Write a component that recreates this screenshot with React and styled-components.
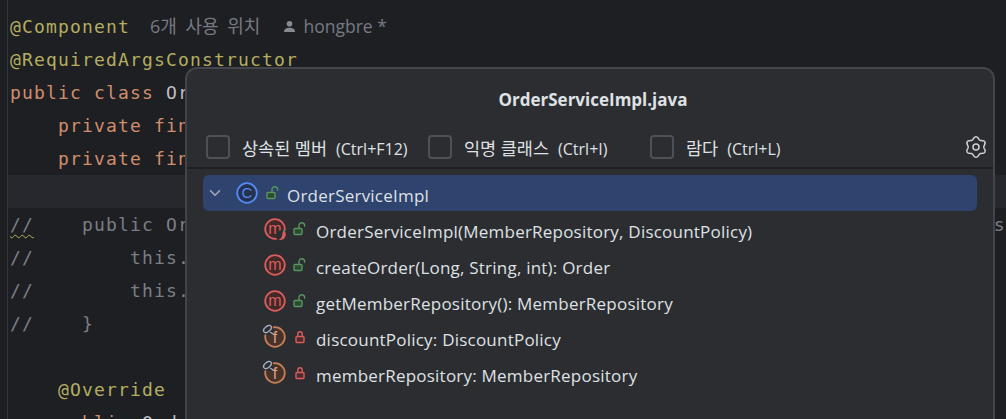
import styled, { createGlobalStyle } from "styled-components";
import { LuChevronDown } from "react-icons/lu";

const GlobalStyle = createGlobalStyle`
  html, body {
    margin: 0;
    padding: 0;
    height: 100%;
    overflow: hidden;
    background: #1e1f22;
  }
`

const Screen = styled.div`
  position: relative;
  width: 1006px;
  height: 419px;
  overflow: hidden;
  background: #1e1f22;
`

const Editor = styled.div`
  margin-left: 7px;
  height: 100%;
  padding-top: 10px;
  box-sizing: border-box;
  border-left: 1px solid #313438;
  font-family: "DejaVu Sans Mono", "Liberation Mono", monospace;
  font-size: 18px;
  letter-spacing: 1.16px;
  color: #bcbec4;
`

const Line = styled.div`
  height: 33px;
  line-height: 33px;
  padding-left: 2px;
  white-space: pre;
  background: ${(p) => (p.$current ? "#26282e" : "transparent")};
`

const Annotation = styled.span`
  color: #b3ae60;
`

const Keyword = styled.span`
  color: #cf8e6d;
`

const Comment = styled.span`
  color: #7a7e85;
`

const Wavy = styled.span`
  text-decoration: underline wavy #b3ae60 1px;
  text-underline-offset: 3px;
`

const Hint = styled.span`
  display: inline-flex;
  align-items: center;
  margin-left: 20px;
  font-family: "Open Sans", "Noto Sans CJK KR", sans-serif;
  font-size: 18px;
  word-spacing: 4px;
  letter-spacing: 0;
  color: #767a82;
  vertical-align: top;
`

const Author = styled(Hint)`
  margin-left: 23px;
  gap: 7px;
  font-size: 17.5px;
  word-spacing: 0;
`

const Popup = styled.div`
  position: absolute;
  left: 185px;
  top: 67px;
  width: 810px;
  height: 380px;
  box-sizing: border-box;
  background: #2b2d30;
  border: 2px solid #43454a;
  border-radius: 12px;
  font-family: "Open Sans", "Noto Sans CJK KR", sans-serif;
  color: #dfe1e5;
`

const Title = styled.div`
  height: 62px;
  line-height: 62px;
  padding-left: 6px;
  text-align: center;
  font-size: 17px;
  font-weight: 700;
`

const Filters = styled.div`
  display: flex;
  align-items: center;
  height: 32px;
  padding: 0 5px 4px 19px;
  border-bottom: 2px solid #1e1f22;
`

const Filter = styled.label`
  display: flex;
  align-items: center;
  gap: 12px;
  width: ${(p) => p.$width}px;
  font-size: 16px;
`

const Korean = styled.span`
  font-size: 17.5px;
  margin-right: 9px;
`

const Checkbox = styled.span`
  flex: none;
  width: 20px;
  height: 20px;
  border: 2px solid #4e5157;
  border-radius: 4px;
`

const GearSlot = styled.svg`
  flex: none;
  margin-left: auto;
  margin-right: 1px;
  width: 22px;
  height: 22px;
`

const Tree = styled.div`
  padding: 6px 16px 0 16px;
`

const Row = styled.div`
  display: flex;
  align-items: center;
  height: 36px;
  padding-left: ${(p) => (p.$root ? 0 : 59)}px;
  border-radius: 6px;
  background: ${(p) => (p.$root ? "#2e436e" : "transparent")};
  font-size: 17px;
  letter-spacing: 0.22px;
  white-space: nowrap;
`

const RowText = styled.span`
  margin-top: 4px;
`

const Chevron = styled(LuChevronDown)`
  flex: none;
  width: 18px;
  margin: 0 10px 0 3px;
  font-size: 18px;
  color: #a8adbd;
`

const IconSlot = styled.svg`
  flex: none;
  width: 26px;
  height: 26px;
`

const LockSlot = styled.svg`
  flex: none;
  width: 14px;
  height: 14px;
  margin: -1px ${(p) => (p.$root ? 7 : 9)}px 0 ${(p) => (p.$root ? 6 : 5)}px;
`

const PALETTE = {
  c: { stroke: "#548af7", fill: "#25324d", text: "#548af7" },
  m: { stroke: "#db5c5c", fill: "#402929", text: "#db5c5c" },
  f: { stroke: "#c77d55", fill: "#45322b", text: "#e0a080" },
}

const SymbolIcon = ({ kind, pepper, pin }) => {
  const c = PALETTE[kind]
  return (
    <IconSlot viewBox="0 0 26 26">
      <circle cx="13" cy="13" r="9.800" fill={c.fill} stroke={c.stroke} strokeWidth="1.800" />
      <text
        x="13"
        y={kind === "f" ? 19 : 18}
        textAnchor="middle"
        fontFamily="'Liberation Sans', sans-serif"
        fontSize={kind === "c" ? 15 : 16}
        fill={c.text}
      >
        {kind === "c" ? "C" : kind}
      </text>
      {pepper && (
        <>
          <circle cx="20" cy="20" r="6" fill="#2b2d30" />
          <path d="M22 14.500c2 1.500 2.500 5 .5 7.500-1.500 1.800-4 2.500-6 2 2.500-1 3.500-3 3.800-5.500.1-1.500.6-3 1.700-4z" fill="#db5c5c" />
          <path d="M21.500 16l1-2.500" stroke="#57965c" strokeWidth="1.200" />
        </>
      )}
      {pin && (
        <>
          <circle cx="6" cy="5.500" r="5.500" fill="#2b2d30" />
          <ellipse cx="5.500" cy="5" rx="4.500" ry="2.600" transform="rotate(-40 5.500 5)" fill="#2b2d30" stroke="#a8adbd" strokeWidth="1.400" />
          <path d="M8 8l4 2.500" stroke="#a8adbd" strokeWidth="1.400" />
        </>
      )}
    </IconSlot>
  )
}

const Lock = ({ open, root }) => (
  <LockSlot $root={root} viewBox="0 0 14 14" fill="none" strokeWidth="1.400">
    {open ? (
      <>
        <rect x="1" y="6.500" width="8" height="6" rx="1" fill="#2b4a30" stroke="#57965c" />
        <path d="M6 6.500V3.500a2.800 2.800 0 0 1 5.600 0v1.200" stroke="#57965c" />
      </>
    ) : (
      <>
        <rect x="3" y="6.500" width="8" height="6" rx="1" fill="#4a2b2e" stroke="#db5c5c" />
        <path d="M4.800 6.500V4a2.200 2.200 0 0 1 4.400 0v2.500" stroke="#db5c5c" />
      </>
    )}
  </LockSlot>
)

const PersonIcon = () => (
  <svg width="13" height="13" viewBox="0 0 13 13" fill="#868a91">
    <circle cx="6.500" cy="3.800" r="2.800" />
    <path d="M1 12c0-3 2.500-4.300 5.500-4.300S12 9 12 12z" />
  </svg>
)

// six soft lobes, the points sit on top and bottom
const gearPath = () => {
  const points = []
  for (let i = 0; i < 120; i++) {
    const a = (i / 120) * Math.PI * 2
    const r = 9 + 1.2 * Math.cos(6 * a)
    points.push(`${(11 + r * Math.sin(a)).toFixed(2)} ${(11 - r * Math.cos(a)).toFixed(2)}`)
  }
  return `M${points.join("L")}Z`
}

const GearIcon = () => (
  <GearSlot viewBox="0 0 22 22" fill="none" stroke="#ced0d6" strokeWidth="1.500">
    <path d={gearPath()} strokeLinejoin="round" />
    <circle cx="11" cy="11" r="3" />
  </GearSlot>
)

const members = [
  { kind: "m", pepper: true, open: true, text: "OrderServiceImpl(MemberRepository, DiscountPolicy)" },
  { kind: "m", open: true, text: "createOrder(Long, String, int): Order" },
  { kind: "m", open: true, text: "getMemberRepository(): MemberRepository" },
  { kind: "f", pin: true, text: "discountPolicy: DiscountPolicy" },
  { kind: "f", pin: true, text: "memberRepository: MemberRepository" },
]

const App = () => {
  return (
    <Screen>
      <GlobalStyle />
      <Editor>
        <Line>
          <Annotation>@Component</Annotation>
          <Hint>6개 사용 위치</Hint>
          <Author><PersonIcon />hongbre *</Author>
        </Line>
        <Line><Annotation>@RequiredArgsConstructor</Annotation></Line>
        <Line><Keyword>public class </Keyword>OrderServiceImpl</Line>
        <Line>{"    "}<Keyword>private final </Keyword>MemberRepository</Line>
        <Line>{"    "}<Keyword>private final </Keyword>DiscountPolicy</Line>
        <Line $current />
        <Line><Comment><Wavy>//</Wavy>{"    public OrderServiceImpl(MemberRepository memberRepository, DiscountPolicy discountPolicy) {"}</Comment></Line>
        <Line><Comment>{"//        this.memberRepository"}</Comment></Line>
        <Line><Comment>{"//        this.discountPolicy"}</Comment></Line>
        <Line><Comment>{"//    }"}</Comment></Line>
        <Line />
        <Line>{"    "}<Annotation>@Override</Annotation></Line>
        <Line>{"    "}<Keyword>public </Keyword>Order</Line>
      </Editor>
      <Popup>
        <Title>OrderServiceImpl.java</Title>
        <Filters>
          <Filter $width={222}><Checkbox /><span><Korean>상속된 멤버</Korean>(Ctrl+F12)</span></Filter>
          <Filter $width={222}><Checkbox /><span><Korean>익명 클래스</Korean>(Ctrl+I)</span></Filter>
          <Filter $width={200}><Checkbox /><span><Korean>람다</Korean>(Ctrl+L)</span></Filter>
          <GearIcon />
        </Filters>
        <Tree>
          <Row $root>
            <Chevron />
            <SymbolIcon kind="c" />
            <Lock open root />
            <RowText>OrderServiceImpl</RowText>
          </Row>
          {members.map((item) => (
            <Row key={item.text}>
              <SymbolIcon kind={item.kind} pepper={item.pepper} pin={item.pin} />
              <Lock open={item.open} />
              <RowText>{item.text}</RowText>
            </Row>
          ))}
        </Tree>
      </Popup>
    </Screen>
  )
}

export default App
